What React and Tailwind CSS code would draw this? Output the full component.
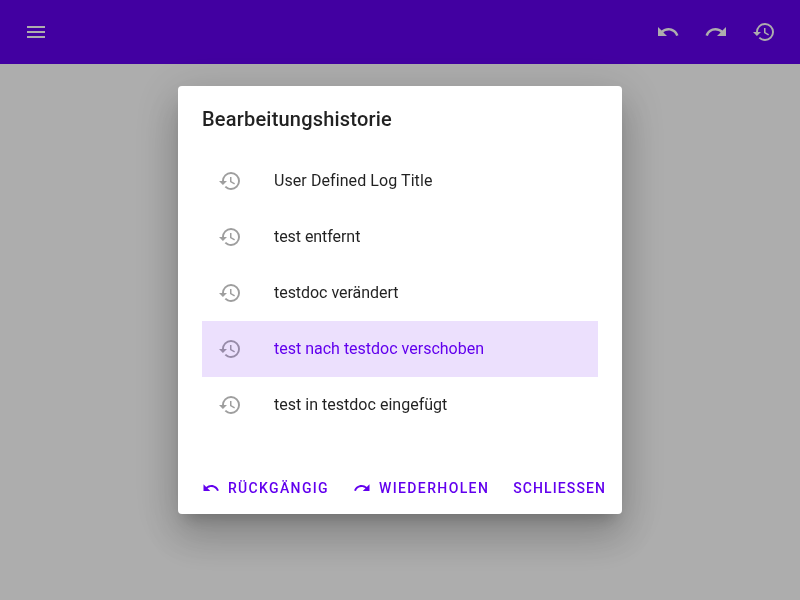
import React from "react";
import { MdHistory, MdUndo, MdRedo, MdMenu } from "react-icons/md";

const entries = [
  { label: "User Defined Log Title", tracking: "tracking-[0.08px]" },
  { label: "test entfernt", tracking: "tracking-[-0.06px]" },
  { label: "testdoc verändert", tracking: "tracking-[-0.04px]" },
  { label: "test nach testdoc verschoben", tracking: "tracking-[0px]", active: true },
  { label: "test in testdoc eingefügt", tracking: "tracking-[0.02px]" },
];

function TopBar() {
  return (
    <header className="flex h-16 items-center bg-[#6200ee] px-6 text-white">
      <MdMenu size={24} />
      <div className="ml-auto flex gap-6">
        <MdUndo size={24} />
        <MdRedo size={24} />
        <MdHistory size={24} />
      </div>
    </header>
  );
}

function Action({ icon: Icon, tracking, children }) {
  return (
    <button
      className={
        "flex h-9 items-center gap-2 px-2 text-sm font-medium whitespace-nowrap text-[#6200ee] uppercase " +
        tracking
      }
    >
      {Icon && <Icon size={18} />}
      {children}
    </button>
  );
}

export default function App() {
  return (
    <div className="h-[600px] w-[800px] overflow-hidden bg-white font-['Roboto',sans-serif] antialiased">
      <TopBar />
      <div className="fixed inset-0 flex items-center justify-center bg-black/32">
        <section className="flex h-[428px] w-[444px] flex-col rounded bg-white shadow-[0_11px_15px_-7px_rgba(0,0,0,0.2),0_24px_38px_3px_rgba(0,0,0,0.14),0_9px_46px_8px_rgba(0,0,0,0.12)]">
          <h2 className="px-6 pt-[17px] text-xl leading-8 font-medium tracking-[0.2px] text-black/87">
            Bearbeitungshistorie
          </h2>
          <ul className="mt-[18px] px-6">
            {entries.map((e) => (
              <li
                key={e.label}
                className={
                  "relative flex h-14 items-center gap-8 px-4 text-base " +
                  e.tracking +
                  (e.active
                    ? " text-[#6200ee] after:absolute after:inset-0 after:bg-[#6200ee]/12 after:content-['']"
                    : " text-black/87")
                }
              >
                <MdHistory size={24} className="text-black/38" />
                <span>{e.label}</span>
              </li>
            ))}
          </ul>
          <div className="mt-auto flex h-[52px] items-center justify-end gap-2 p-2">
            <Action icon={MdUndo} tracking="tracking-[1.35px]">Rückgängig</Action>
            <Action icon={MdRedo} tracking="tracking-[1.38px]">Wiederholen</Action>
            <Action tracking="tracking-[1.1px]">Schliessen</Action>
          </div>
        </section>
      </div>
    </div>
  );
}
